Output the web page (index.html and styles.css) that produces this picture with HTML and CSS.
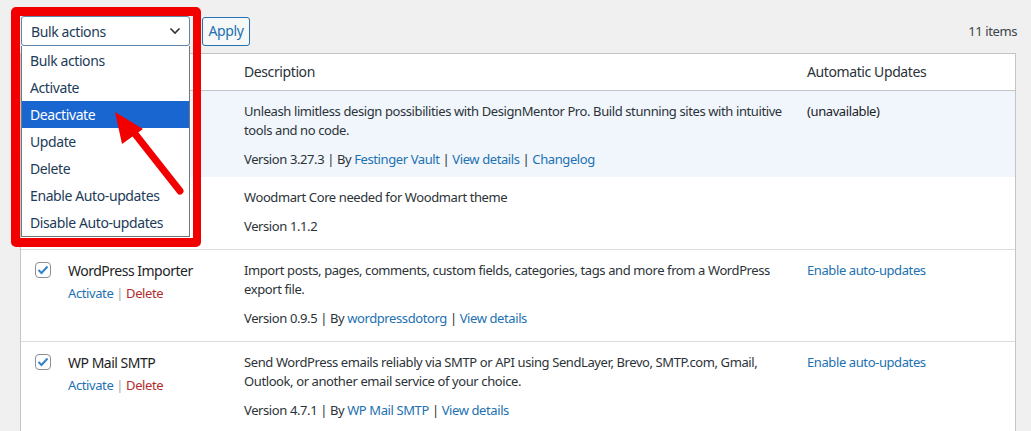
FILE: index.html
```html
<!DOCTYPE html>
<html>
<head>
    <meta charset="UTF-8">
    <title>Plugins</title>
    <link rel="stylesheet" href="styles.css">
</head>
<body>
    <div class="wrap">
        <div class="tablenav">
            <div class="bulk-wrap">
                <div class="bulk-select">
                    <span>Bulk actions</span>
                    <svg class="chevron" width="12" height="8" viewBox="0 0 12 8"><polyline points="1.5,1.5 6,6 10.5,1.5" fill="none" stroke="#2c3338" stroke-width="1.6"/></svg>
                </div>
                <ul class="bulk-list">
                    <li>Bulk actions</li>
                    <li>Activate</li>
                    <li class="selected">Deactivate</li>
                    <li>Update</li>
                    <li>Delete</li>
                    <li>Enable Auto-updates</li>
                    <li>Disable Auto-updates</li>
                </ul>
                <div class="highlight-box"></div>
                <svg class="pointer" width="200" height="220" viewBox="0 0 200 220">
                    <line x1="132" y1="130" x2="180" y2="191" stroke="#f20000" stroke-width="7" stroke-linecap="round"/>
                    <polygon points="115,112 143,129 122,144" fill="#f20000"/>
                </svg>
            </div>
            <button class="apply">Apply</button>
            <div class="count">11 items</div>
        </div>

        <table class="plugins">
            <colgroup>
                <col class="col-check">
                <col class="col-name">
                <col class="col-desc">
                <col>
            </colgroup>
            <thead>
                <tr>
                    <th></th>
                    <th></th>
                    <th>Description</th>
                    <th>Automatic Updates</th>
                </tr>
            </thead>
            <tbody>
                <tr class="active first">
                    <td class="check"></td>
                    <td class="name"></td>
                    <td class="desc">
                        <p>Unleash limitless design possibilities with DesignMentor Pro. Build stunning sites with intuitive tools and no code.</p>
                        <p>Version 3.27.3 | By <a href="#">Festinger Vault</a> | <a href="#">View details</a> | <a href="#">Changelog</a></p>
                    </td>
                    <td class="auto">(unavailable)</td>
                </tr>
                <tr>
                    <td class="check"></td>
                    <td class="name"></td>
                    <td class="desc">
                        <p>Woodmart Core needed for Woodmart theme</p>
                        <p>Version 1.1.2</p>
                    </td>
                    <td class="auto"></td>
                </tr>
                <tr>
                    <td class="check">
                        <span class="checkbox"><svg width="12" height="10" viewBox="0 0 12 10"><polyline points="1.5,5 4.5,8 10.5,1.5" fill="none" stroke="#3582c4" stroke-width="2"/></svg></span>
                    </td>
                    <td class="name">
                        <div class="title">WordPress Importer</div>
                        <div class="actions"><a href="#">Activate</a> <span class="sep">|</span> <a href="#" class="delete">Delete</a></div>
                    </td>
                    <td class="desc">
                        <p>Import posts, pages, comments, custom fields, categories, tags and more from a WordPress export file.</p>
                        <p>Version 0.9.5 | By <a href="#">wordpressdotorg</a> | <a href="#">View details</a></p>
                    </td>
                    <td class="auto"><a href="#">Enable auto-updates</a></td>
                </tr>
                <tr>
                    <td class="check">
                        <span class="checkbox"><svg width="12" height="10" viewBox="0 0 12 10"><polyline points="1.5,5 4.5,8 10.5,1.5" fill="none" stroke="#3582c4" stroke-width="2"/></svg></span>
                    </td>
                    <td class="name">
                        <div class="title">WP Mail SMTP</div>
                        <div class="actions"><a href="#">Activate</a> <span class="sep">|</span> <a href="#" class="delete">Delete</a></div>
                    </td>
                    <td class="desc">
                        <p>Send WordPress emails reliably via SMTP or API using SendLayer, Brevo, SMTP.com, Gmail, Outlook, or another email service of your choice.</p>
                        <p>Version 4.7.1 | By <a href="#">WP Mail SMTP</a> | <a href="#">View details</a></p>
                    </td>
                    <td class="auto"><a href="#">Enable auto-updates</a></td>
                </tr>
            </tbody>
        </table>
    </div>
</body>
</html>
```

FILE: styles.css
```css
body {
    margin: 0;
    background-color: #f0f0f1;
    font-family: "Segoe UI", "Noto Sans", sans-serif;
    font-size: 13px;
    letter-spacing: -0.4px;
    color: #3c434a;
    overflow: hidden;
}
a {
    color: #2271b1;
    text-decoration: none;
}
.wrap {
    padding: 16px 15px 0 20px;
}
.tablenav {
    display: flex;
    align-items: center;
    height: 30px;
    margin-bottom: 7px;
}
.bulk-wrap {
    position: relative;
    margin-left: 1px;
}
.bulk-select {
    width: 169px;
    height: 30px;
    box-sizing: border-box;
    border: 1px solid #5e86aa;
    border-radius: 3px;
    background: #fff;
    display: flex;
    align-items: center;
    justify-content: space-between;
    padding: 0 8px 0 9px;
    font-size: 14px;
    color: #1d3b58;
}
.bulk-list {
    position: absolute;
    top: 30px;
    left: 0;
    width: 169px;
    box-sizing: border-box;
    margin: 0;
    padding: 0;
    list-style: none;
    background: #fff;
    border: 1px solid #767676;
    border-top: none;
    z-index: 5;
}
.bulk-list li {
    height: 27px;
    line-height: 27px;
    padding-left: 8px;
    font-size: 14px;
    color: #1d3b58;
}
.bulk-list li:first-child {
    height: 28px;
    line-height: 29px;
}
.bulk-list li.selected {
    background: #1a66d1;
    color: #fff;
}
.highlight-box {
    position: absolute;
    top: -9px;
    left: -10px;
    width: 190px;
    height: 240px;
    box-sizing: border-box;
    border: 9px solid #f20000;
    border-right-width: 8px;
    border-radius: 5px;
    z-index: 6;
}
.pointer {
    position: absolute;
    top: -16px;
    left: -21px;
    z-index: 7;
}
.apply {
    margin-left: 12px;
    height: 29px;
    width: 48px;
    padding: 0 0 1px;
    border: 1px solid #2271b1;
    border-radius: 3px;
    background: #f6f7f7;
    color: #2271b1;
    font-family: inherit;
    font-size: 14px;
    letter-spacing: -0.4px;
}
.count {
    margin-left: auto;
    margin-right: -1px;
    font-size: 13px;
}
.plugins {
    width: 996px;
    table-layout: fixed;
    border-spacing: 0;
    border: 1px solid #c3c4c7;
    background: #fff;
}
.col-check {
    width: 37px;
}
.col-name {
    width: 176px;
}
.col-desc {
    width: 563px;
}
.plugins th {
    text-align: left;
    font-weight: normal;
    font-size: 14px;
    color: #2c3338;
    padding: 8px 10px;
    line-height: 20px;
    border-bottom: 1px solid #c3c4c7;
}
.plugins td {
    vertical-align: top;
    padding: 11px 10px 13px;
    line-height: 19px;
    border-bottom: 1px solid #dcdcde;
}
.plugins tr.active td {
    background: #f0f6fc;
}
.plugins tr.first td {
    padding-bottom: 8px;
    border-bottom: none;
}
.plugins tbody tr:last-child td {
    border-bottom: none;
}
.plugins td.check {
    padding: 12px 0 0 14px;
}
.checkbox {
    display: flex;
    align-items: center;
    justify-content: center;
    width: 16px;
    height: 16px;
    box-sizing: border-box;
    border: 1px solid #8c8f94;
    border-radius: 4px;
}
.name .title {
    font-size: 14px;
    letter-spacing: -0.5px;
    color: #1d2327;
}
.name .actions {
    margin-top: 4px;
}
.actions .sep {
    color: #a7aaad;
}
.actions .delete {
    color: #b32d2e;
}
.desc p {
    margin: 0 0 10px;
    color: #2c3338;
}
.desc p:last-child {
    margin-bottom: 0;
}
.auto {
    color: #1d2327;
}
```
